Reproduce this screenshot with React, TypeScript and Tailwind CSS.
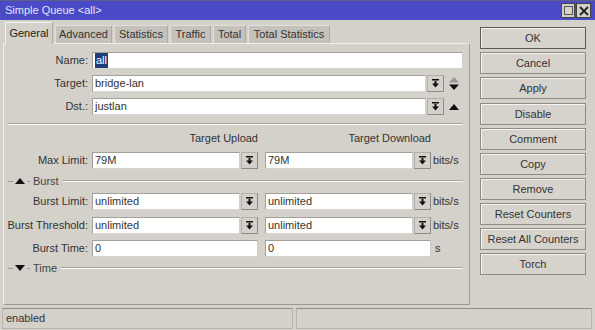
import React from "react";

const DropIcon = () => (
  <svg width="7" height="9" viewBox="0 0 7 9">
    <rect x="0" y="0" width="7" height="1.5" fill="#111" />
    <rect x="2.5" y="2" width="2" height="3" fill="#111" />
    <polygon points="0,4.5 7,4.5 3.5,8.5" fill="#111" />
  </svg>
);

const DD = () => (
  <div className="w-[17px] h-[17px] ml-[1px] shrink-0 flex items-center justify-center bg-[#d4d1cb] border border-[#b3b0a9] border-r-[#8e8b84] border-b-[#8e8b84]">
    <DropIcon />
  </div>
);

const Input = ({ w, children }: { w: string; children?: React.ReactNode }) => (
  <div
    className={`${w} h-[17px] shrink-0 bg-white border border-[#a3a09a] border-b-[#d8d6d1] border-r-[#d0cec9] flex items-center pl-[2px] whitespace-nowrap overflow-hidden`}
  >
    {children}
  </div>
);

const Label = ({ children }: { children: React.ReactNode }) => (
  <div className="w-[84px] shrink-0 text-right whitespace-nowrap">{children}</div>
);

const Row = ({ label, children, className }: { label: string; children: React.ReactNode; className: string }) => (
  <div className={`flex items-center h-[17px] ${className}`}>
    <Label>{label}</Label>
    <div className="ml-[4px] flex items-center">{children}</div>
  </div>
);

const Pair = ({ value }: { value: string }) => (
  <div className="flex items-center w-[166px]">
    <Input w="w-[148px]">{value}</Input>
    <DD />
  </div>
);

const Section = ({ title, open, className }: { title: string; open: boolean; className: string }) => (
  <div className={`flex items-center h-[12px] pl-[4px] pr-[6px] ${className}`}>
    <div className="w-[5px] h-px bg-[#9c9992]" />
    <svg width="10" height="6" viewBox="0 0 10 6" className="ml-[2px]">
      {open ? <polygon points="0,6 10,6 5,0" fill="#111" /> : <polygon points="0,0 10,0 5,6" fill="#111" />}
    </svg>
    <div className="ml-[2px] w-[3px] h-px bg-[#9c9992]" />
    <span className="ml-[3px] text-[#444]">{title}</span>
    <div className="ml-[4px] flex-1 h-[2px] border-t border-[#a5a29b] border-b border-b-white" />
  </div>
);

const Btn = ({ children, def, className = "" }: { children: React.ReactNode; def?: boolean; className?: string }) => (
  <div
    className={`h-[22px] flex items-center justify-center border ${
      def ? "border-[#5c5a55]" : "border-[#8f8c85]"
    } shadow-[inset_1px_1px_0_#f4f3f0] bg-[#d6d3cd] ${className}`}
  >
    {children}
  </div>
);

const tabs: [string, string][] = [
  ["Advanced", "w-[57px]"],
  ["Statistics", "w-[54px]"],
  ["Traffic", "w-[41px]"],
  ["Total", "w-[33px]"],
  ["Total Statistics", "w-[82px]"],
];

export default function App() {
  return (
    <div className="w-[595px] h-[330px] bg-[#d4d1cb] flex flex-col font-['Liberation_Sans',Arial,sans-serif] text-[11px] text-[#333] overflow-hidden">
      {/* title bar */}
      <div className="h-[20px] shrink-0 bg-[#4a4ac6] border-t border-[#5e5e8a] flex items-center pl-[5px] pr-[4px]">
        <span className="text-[#e4e4f6] text-[11px]">Simple Queue &lt;all&gt;</span>
        <div className="ml-auto flex gap-[1px]">
          <div className="w-[14px] h-[15px] bg-[#d4d1cb] border border-[#444] flex items-center justify-center">
            <div className="w-[9px] h-[9px] border border-[#555]" />
          </div>
          <div className="w-[15px] h-[15px] bg-[#d4d1cb] border border-[#444] flex items-center justify-center">
            <svg width="10" height="10" viewBox="0 0 10 10">
              <path d="M1 1 L9 9 M9 1 L1 9" stroke="#222" strokeWidth="1.8" />
            </svg>
          </div>
        </div>
      </div>

      <div className="flex flex-1 min-h-0">
        {/* left */}
        <div className="ml-[3px] mt-[2px] w-[467px] flex flex-col">
          <div className="h-[21px] flex items-end gap-[2px] pl-[2px]">
            <div className="w-[48px] h-[22px] -mb-px relative z-10 bg-[#d4d1cb] border border-b-0 border-[#aeaba4] border-t-[#f2f1ee] border-l-[#f2f1ee] flex items-center justify-center text-[#222]">
              General
            </div>
            {tabs.map(([t, w]) => (
              <div
                key={t}
                className={`${w} h-[18px] bg-[#c5c2bb] border border-b-0 border-[#aeaba4] border-t-[#e2e0dc] border-l-[#e2e0dc] flex items-center justify-center whitespace-nowrap`}
              >
                {t}
              </div>
            ))}
          </div>
          <div className="h-[262px] border border-[#f0efec] border-r-[#9d9a93] border-b-[#9d9a93] flex flex-col">
            <Row label="Name:" className="mt-[8px]">
              <Input w="w-[371px]">
                <span className="bg-[#1f3b7a] text-white h-[15px] leading-[15px] px-px">all</span>
              </Input>
            </Row>
            <Row label="Target:" className="mt-[6px]">
              <Input w="w-[334px]">bridge-lan</Input>
              <DD />
              <svg width="10" height="13" viewBox="0 0 10 13" className="ml-[5px]">
                <polygon points="0,5.5 10,5.5 5,0" fill="#9a9792" />
                <polygon points="0,7.5 10,7.5 5,13" fill="#111" />
              </svg>
            </Row>
            <Row label="Dst.:" className="mt-[6px]">
              <Input w="w-[334px]">justlan</Input>
              <DD />
              <svg width="10" height="6" viewBox="0 0 10 6" className="ml-[5px]">
                <polygon points="0,6 10,6 5,0" fill="#111" />
              </svg>
            </Row>
            <div className="mt-[8px] ml-[4px] mr-[6px] h-[2px] border-t border-[#a5a29b] border-b border-b-white" />
            <div className="mt-[6px] h-[14px] flex items-center pl-[84px]">
              <div className="ml-[4px] w-[166px] text-right">Target Upload</div>
              <div className="ml-[7px] w-[166px] text-right">Target Download</div>
            </div>
            <Row label="Max Limit:" className="mt-[7px]">
              <Pair value="79M" />
              <div className="ml-[7px]" />
              <Pair value="79M" />
              <span className="ml-[2px]">bits/s</span>
            </Row>
            <Section title="Burst" open className="mt-[6px]" />
            <Row label="Burst Limit:" className="mt-[6px]">
              <Pair value="unlimited" />
              <div className="ml-[7px]" />
              <Pair value="unlimited" />
              <span className="ml-[2px]">bits/s</span>
            </Row>
            <Row label="Burst Threshold:" className="mt-[7px]">
              <Pair value="unlimited" />
              <div className="ml-[7px]" />
              <Pair value="unlimited" />
              <span className="ml-[2px]">bits/s</span>
            </Row>
            <Row label="Burst Time:" className="mt-[6px]">
              <Input w="w-[166px]">0</Input>
              <Input w="w-[166px] ml-[7px]">0</Input>
              <span className="ml-[4px]">s</span>
            </Row>
            <Section title="Time" open={false} className="mt-[5px]" />
          </div>
        </div>

        {/* right buttons */}
        <div className="ml-[10px] mt-[7px] w-[106px] flex flex-col gap-[3px]">
          <Btn def>OK</Btn>
          <Btn>Cancel</Btn>
          <Btn>Apply</Btn>
          <Btn className="mt-[1px]">Disable</Btn>
          <Btn>Comment</Btn>
          <Btn>Copy</Btn>
          <Btn>Remove</Btn>
          <Btn>Reset Counters</Btn>
          <Btn>Reset All Counters</Btn>
          <Btn>Torch</Btn>
        </div>
      </div>

      {/* status bar */}
      <div className="h-[22px] shrink-0 flex gap-[3px] px-[2px] pb-[1px]">
        <div className="w-[291px] h-full border border-[#b8b5ae] border-t-[#8f8c85] flex items-center pl-[3px]">enabled</div>
        <div className="w-[296px] h-full border border-[#b8b5ae] border-t-[#8f8c85]" />
      </div>
    </div>
  );
}
